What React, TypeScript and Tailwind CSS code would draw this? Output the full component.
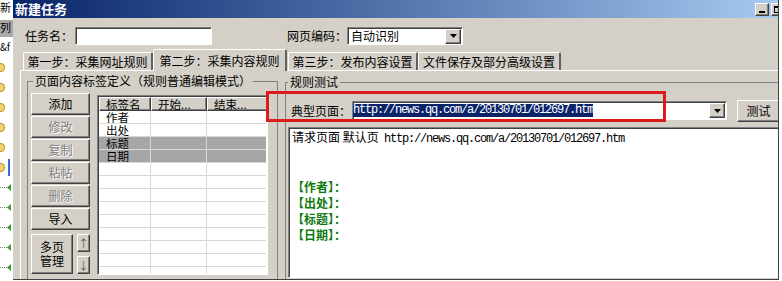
import React from 'react';

// classic win32 bevels
const raised =
  'border border-t-white border-l-white border-r-[#404040] border-b-[#404040] shadow-[inset_-1px_-1px_0_#808080]';
const sunken =
  'border border-t-[#808080] border-l-[#808080] border-r-white border-b-white shadow-[inset_1px_1px_0_#404040]';
const cjk = "font-['Noto_Sans_CJK_SC',sans-serif]";
const mono = "font-['Liberation_Mono',monospace] tracking-[-1.2px]";

const URL = 'http://news.qq.com/a/20130701/012697.htm';

const tagButtons = [
  { label: '添加', enabled: true },
  { label: '修改', enabled: false },
  { label: '复制', enabled: false },
  { label: '粘帖', enabled: false },
  { label: '删除', enabled: false },
  { label: '导入', enabled: true },
];

const tagRows = [
  { name: '作者', selected: false },
  { name: '出处', selected: false },
  { name: '标题', selected: true },
  { name: '日期', selected: true },
  ...Array.from({ length: 9 }, () => ({ name: '', selected: false })),
];

const tabs = [
  { label: '第一步：采集网址规则', width: 'w-[130px]', active: false },
  { label: '第二步：采集内容规则', width: 'w-[134px]', active: true },
  { label: '第三步：发布内容设置', width: 'w-[130px]', active: false },
  { label: '文件保存及部分高级设置', width: 'w-[143px]', active: false },
];

function DropArrow({ className = '' }: { className?: string }) {
  return (
    <div className={`w-[16px] h-[15px] bg-[#d4d0c8] ${raised} flex items-center justify-center shrink-0 ${className}`}>
      <svg width="7" height="4" viewBox="0 0 7 4">
        <polygon points="0,0 7,0 3.5,4" fill="#000" />
      </svg>
    </div>
  );
}

function BackgroundStrip() {
  return (
    <div className="w-[13px] h-[281px] flex flex-col bg-white overflow-hidden shrink-0 text-[12px] leading-[14px]">
      <div className="h-[16px] text-[11px] whitespace-nowrap">新</div>
      <div className="h-[4px]" />
      <div className="h-[17px] bg-[#a8a8a8] text-[11px] whitespace-nowrap">列</div>
      <div className="h-[20px] text-[10px] whitespace-nowrap pt-[3px]">&amp;f</div>
      {Array.from({ length: 6 }).map((_, i) => (
        <div key={i} className="h-[20px] flex items-center">
          <div className="w-[5px] h-[9px] rounded-r-full bg-[#f0d070] border border-l-0 border-[#b89030]" />
          {i === 5 && <div className="ml-auto mr-[3px] w-[2px] h-[17px] bg-[#3a6ec8]" />}
        </div>
      ))}
      {Array.from({ length: 5 }).map((_, i) => (
        <div key={i} className="h-[20px] flex items-center">
          <div className="w-[7px] border-t border-dotted border-[#808080]" />
          <svg width="4" height="7" viewBox="0 0 4 7">
            <polygon points="4,0 0,3.5 4,7" fill="#3c9a2c" />
          </svg>
        </div>
      ))}
    </div>
  );
}

function TagTable() {
  return (
    <div className={`ml-[7px] mt-[7px] w-[171px] h-[180px] bg-white p-px ${sunken} overflow-hidden`}>
      <div className="flex h-[14px]">
        {[
          ['标签名', 'w-[52px]'],
          ['开始...', 'w-[56px]'],
          ['结束...', 'w-[70px]'],
        ].map(([t, w]) => (
          <div key={t} className={`${w} shrink-0 bg-[#d4d0c8] ${raised} pl-[6px] text-[11.5px] leading-[12px] whitespace-nowrap`}>
            {t}
          </div>
        ))}
      </div>
      {tagRows.map((row, i) => (
        <div key={i} className={`flex h-[13px] border-b border-[#d8d8d8] ${row.selected ? 'bg-[#a6a6a6]' : ''}`}>
          <div className="w-[52px] shrink-0 border-r border-[#d8d8d8] pl-[7px] text-[11.5px] leading-[12px]">{row.name}</div>
          <div className="w-[56px] shrink-0 border-r border-[#d8d8d8]" />
          <div className="w-[70px] shrink-0" />
        </div>
      ))}
    </div>
  );
}

function TagGroup() {
  return (
    <fieldset className="ml-[6px] mt-[3px] w-[251px] h-[215px] shrink-0 border border-[#808080] px-[3px]">
      <legend className="ml-[2px] px-[2px] leading-[14px] whitespace-nowrap">页面内容标签定义（规则普通编辑模式）</legend>
      <div className="flex items-start">
        <div className="mt-[5px] w-[59px] flex flex-col gap-px">
          {tagButtons.map((b) => (
            <div
              key={b.label}
              className={`h-[22px] bg-[#d4d0c8] ${raised} flex items-center justify-center ${
                b.enabled ? 'text-black' : 'text-[#808080] [text-shadow:1px_1px_0_#fff]'
              }`}
            >
              {b.label}
            </div>
          ))}
          <div className="mt-[3px] flex gap-[4px]">
            <div className={`w-[42px] h-[40px] bg-[#d4d0c8] ${raised} flex flex-col items-center justify-center leading-[14px]`}>
              <span>多页</span>
              <span>管理</span>
            </div>
            <div className="w-[13px] flex flex-col gap-[4px]">
              <div className={`h-[18px] bg-[#d4d0c8] ${raised} flex items-center justify-center text-[11px] text-[#606060]`}>↑</div>
              <div className={`h-[18px] bg-[#d4d0c8] ${raised} flex items-center justify-center text-[11px] text-[#606060]`}>↓</div>
            </div>
          </div>
        </div>
        <TagTable />
      </div>
    </fieldset>
  );
}

function TestGroup() {
  return (
    <fieldset className="ml-[7px] mt-[4px] w-[520px] h-[220px] shrink-0 border border-[#808080] px-[2px]">
      <legend className="px-[2px] leading-[14px]">规则测试</legend>
      <div className="mt-[11px] flex items-start">
        <span className="ml-[3px] w-[61px] leading-[22px] whitespace-nowrap">典型页面：</span>
        <div className={`mt-px w-[375px] h-[19px] bg-white p-px ${sunken} flex items-center`}>
          <span className={`-ml-px bg-[#0a246a] text-white leading-[13px] ${mono} text-[12px]`}>{URL}</span>
          <DropArrow className="ml-auto" />
        </div>
        <div className={`ml-[10px] w-[43px] h-[22px] bg-[#d4d0c8] ${raised} flex items-center justify-center`}>测试</div>
      </div>
      <div className={`mt-[5px] w-[500px] h-[151px] bg-white p-px ${sunken}`}>
        <div className="pl-[2px] leading-[16px]">
          <div className="whitespace-nowrap">
            请求页面&nbsp;默认页&nbsp;&nbsp;<span className={`${mono} text-[12px]`}>{URL}</span>
          </div>
          <div className="h-[32px]" />
          {['作者', '出处', '标题', '日期'].map((f) => (
            <div key={f} className="font-bold text-[#107a10]">
              【{f}】：
            </div>
          ))}
        </div>
      </div>
    </fieldset>
  );
}

export default function App() {
  return (
    <div className={`relative w-[782px] h-[281px] bg-white flex overflow-hidden text-[12px] text-black ${cjk}`}>
      <BackgroundStrip />

      <div className="w-[766px] h-[280px] shrink-0 flex flex-col bg-[#d4d0c8] border-r border-b border-[#404040] overflow-hidden">
        {/* title bar */}
        <div className="h-[18px] shrink-0 flex items-start bg-linear-to-r from-[#0a246a] to-[#a6caf0] pl-[2px]">
          <span className="mt-[1px] text-white font-bold text-[13px] leading-[16px]">新建任务</span>
          <div className="ml-auto mt-[3px] mr-[-7px] flex gap-[2px]">
            <div className={`w-[14px] h-[13px] bg-[#d4d0c8] ${raised} flex items-end justify-center pb-[2px]`}>
              <div className="w-[6px] h-[2px] bg-black" />
            </div>
            <div className={`w-[14px] h-[13px] bg-[#d4d0c8] ${raised} flex items-center justify-center`}>
              <div className="w-[8px] h-[7px] border border-t-2 border-black" />
            </div>
          </div>
        </div>

        {/* name / encoding */}
        <div className="mt-[9px] h-[18px] shrink-0 flex items-center">
          <span className="ml-[12px] w-[50px] whitespace-nowrap">任务名：</span>
          <div className={`w-[137px] h-[18px] bg-white ${sunken}`} />
          <span className="ml-[75px] w-[60px] whitespace-nowrap">网页编码：</span>
          <div className={`w-[116px] h-[18px] bg-white p-px ${sunken} flex items-center`}>
            <span className="pl-[2px] leading-[14px]">自动识别</span>
            <DropArrow className="ml-auto" />
          </div>
        </div>

        {/* tabs */}
        <div className="h-[25px] shrink-0 flex items-end pl-[10px]">
          {tabs.map((t, i) => (
            <div
              key={t.label}
              className={`${t.width} ${i === 2 ? 'ml-px' : ''} shrink-0 bg-[#d4d0c8] border-t border-l border-white border-r-2 border-r-[#606060] rounded-t-[2px] text-center whitespace-nowrap leading-[14px] ${
                t.active ? 'relative z-10 h-[22px] -mb-px pt-[4px]' : 'h-[18px] pt-[2px]'
              }`}
            >
              {t.label}
            </div>
          ))}
        </div>

        {/* tab panel */}
        <div className="ml-[7px] flex-1 min-h-0 border-t border-l border-white flex items-start overflow-hidden">
          <TagGroup />
          <TestGroup />
        </div>
      </div>

      {/* red annotation box */}
      <div className="absolute left-[266px] top-[91px] w-[400px] h-[31px] border-[3px] border-[#dc1c1c]" />
    </div>
  );
}
